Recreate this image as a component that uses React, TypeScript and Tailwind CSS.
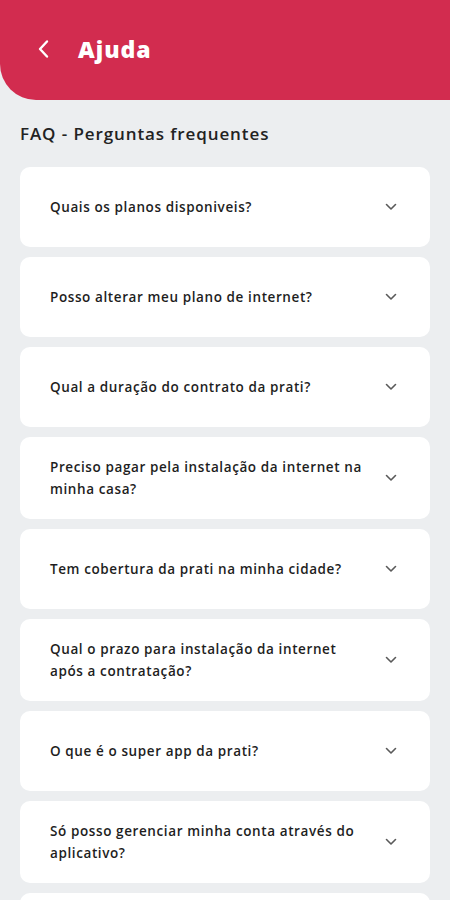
import React from "react";

const questions: string[] = [
  "Quais os planos disponiveis?",
  "Posso alterar meu plano de internet?",
  "Qual a duração do contrato da prati?",
  "Preciso pagar pela instalação da internet na minha casa?",
  "Tem cobertura da prati na minha cidade?",
  "Qual o prazo para instalação da internet após a contratação?",
  "O que é o super app da prati?",
  "Só posso gerenciar minha conta através do aplicativo?",
  "Como faço para falar com o atendimento?",
];

function Chevron() {
  return (
    <svg width="12" height="8" viewBox="0 0 12 8" fill="none" className="shrink-0">
      <path d="M1.5 1.5L6 6L10.5 1.5" stroke="#5a5a5a" strokeWidth="1.6" strokeLinecap="round" strokeLinejoin="round" />
    </svg>
  );
}

export default function App() {
  return (
    <div
      className="w-[450px] h-[900px] overflow-hidden bg-[#eceef0]"
      style={{ fontFamily: '"Open Sans", "Noto Sans", sans-serif' }}
    >
      <header className="h-[100px] bg-[#d22c4f] rounded-bl-[36px] flex items-center pl-[36px] pb-[2px]">
        <svg width="16" height="20" viewBox="0 0 16 20" fill="none">
          <path d="M11 2.5L4 10L11 17.5" stroke="white" strokeWidth="2.4" strokeLinecap="round" strokeLinejoin="round" />
        </svg>
        <h1 className="ml-[26px] text-white text-[23px] font-extrabold tracking-[1px]">Ajuda</h1>
      </header>
      <div className="px-[20px] pt-[22px]">
        <h2 className="text-[17px] font-semibold text-[#222222] leading-[24px] tracking-[0.9px]">
          FAQ - Perguntas frequentes
        </h2>
        <div className="mt-[21px] flex flex-col gap-[10px]">
          {questions.map((q) => (
            <div
              key={q}
              className="bg-white rounded-[10px] min-h-[80px] flex items-center justify-between pl-[30px] pr-[33px] py-[19px]"
            >
              <p className="w-[322px] text-[13.5px] font-semibold text-[#1e1e1e] leading-[22px] tracking-[0.6px]">
                {q}
              </p>
              <Chevron />
            </div>
          ))}
        </div>
      </div>
    </div>
  );
}
